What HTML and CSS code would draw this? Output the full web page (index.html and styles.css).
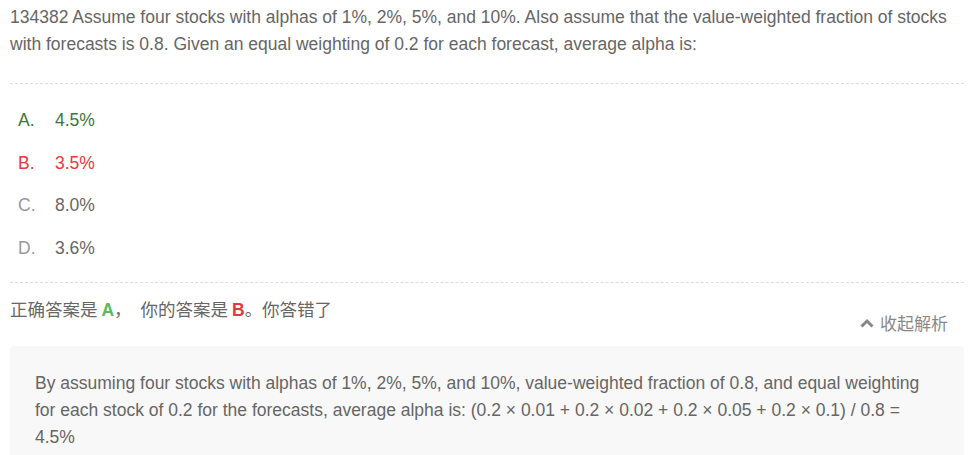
FILE: index.html
```html
<!DOCTYPE html>
<html lang="zh">
<head>
<meta charset="utf-8">
<title>Question</title>
<link rel="stylesheet" href="styles.css">
</head>
<body>
<div class="page">
  <div class="question">134382 Assume four stocks with alphas of 1%, 2%, 5%, and 10%. Also assume that the value-weighted fraction of stocks with forecasts is 0.8. Given an equal weighting of 0.2 for each forecast, average alpha is:</div>
  <ul class="options">
    <li class="option correct"><span class="letter">A.</span><span class="value">4.5%</span></li>
    <li class="option wrong"><span class="letter">B.</span><span class="value">3.5%</span></li>
    <li class="option"><span class="letter">C.</span><span class="value">8.0%</span></li>
    <li class="option"><span class="letter">D.</span><span class="value">3.6%</span></li>
  </ul>
  <div class="result">
    <div class="answer">正确答案是 <b class="ok">A</b><span class="comma">，</span>你的答案是 <b class="bad">B</b>。你答错了</div>
    <div class="toggle"><svg class="chev" width="14" height="10" viewBox="0 0 14 10"><path d="M1.5 8.5 L7 3 L12.5 8.5" fill="none" stroke="#888" stroke-width="3"/></svg>收起解析</div>
  </div>
  <div class="analysis">By assuming four stocks with alphas of 1%, 2%, 5%, and 10%, value-weighted fraction of 0.8, and equal weighting for each stock of 0.2 for the forecasts, average alpha is: (0.2 × 0.01 + 0.2 × 0.02 + 0.2 × 0.05 + 0.2 × 0.1) / 0.8 = 4.5%</div>
</div>
</body>
</html>
```
FILE: styles.css
```css
html, body {
  margin: 0;
  padding: 0;
  background: #fff;
}
.page {
  padding: 0 10px;
  font-family: "Liberation Sans", Arial, "Noto Sans CJK SC", sans-serif;
  font-size: 17.5px;
  color: #666;
}
.question {
  padding-top: 4px;
  line-height: 27px;
  padding-bottom: 25px;
  border-bottom: 1px dashed #ddd;
}
.options {
  list-style: none;
  margin: 0;
  padding: 15px 0 13px 8px;
  border-bottom: 1px dashed #ddd;
}
.option {
  display: flex;
  height: 42.5px;
  line-height: 42.5px;
}
.letter {
  width: 37px;
  color: #999;
}
.value {
  color: #666;
}
.option.correct .letter, .option.correct .value {
  color: #3c763d;
}
.option.wrong .letter, .option.wrong .value {
  color: #e4393c;
}
.result {
  display: flex;
  justify-content: space-between;
  align-items: flex-start;
  margin-top: 14px;
}
.answer {
  font-family: "Noto Sans CJK SC", sans-serif;
  font-size: 17.5px;
  line-height: 24px;
  color: #666;
}
.answer b {
  font-family: "Liberation Sans", Arial, sans-serif;
  font-size: 17.5px;
  font-weight: bold;
}
.comma {
  margin-right: 9px;
}
.ok { color: #5cb85c; }
.bad { color: #e4393c; }
.toggle {
  display: flex;
  align-items: center;
  padding-top: 14px;
  padding-right: 16px;
  font-family: "Noto Sans CJK SC", sans-serif;
  font-size: 17px;
  line-height: 24px;
  color: #888;
}
.chev {
  margin-right: 6px;
}
.analysis {
  margin-top: 11px;
  background: #f8f8f8;
  border-radius: 4px;
  padding: 24px 25px 20px;
  line-height: 27px;
}
```
